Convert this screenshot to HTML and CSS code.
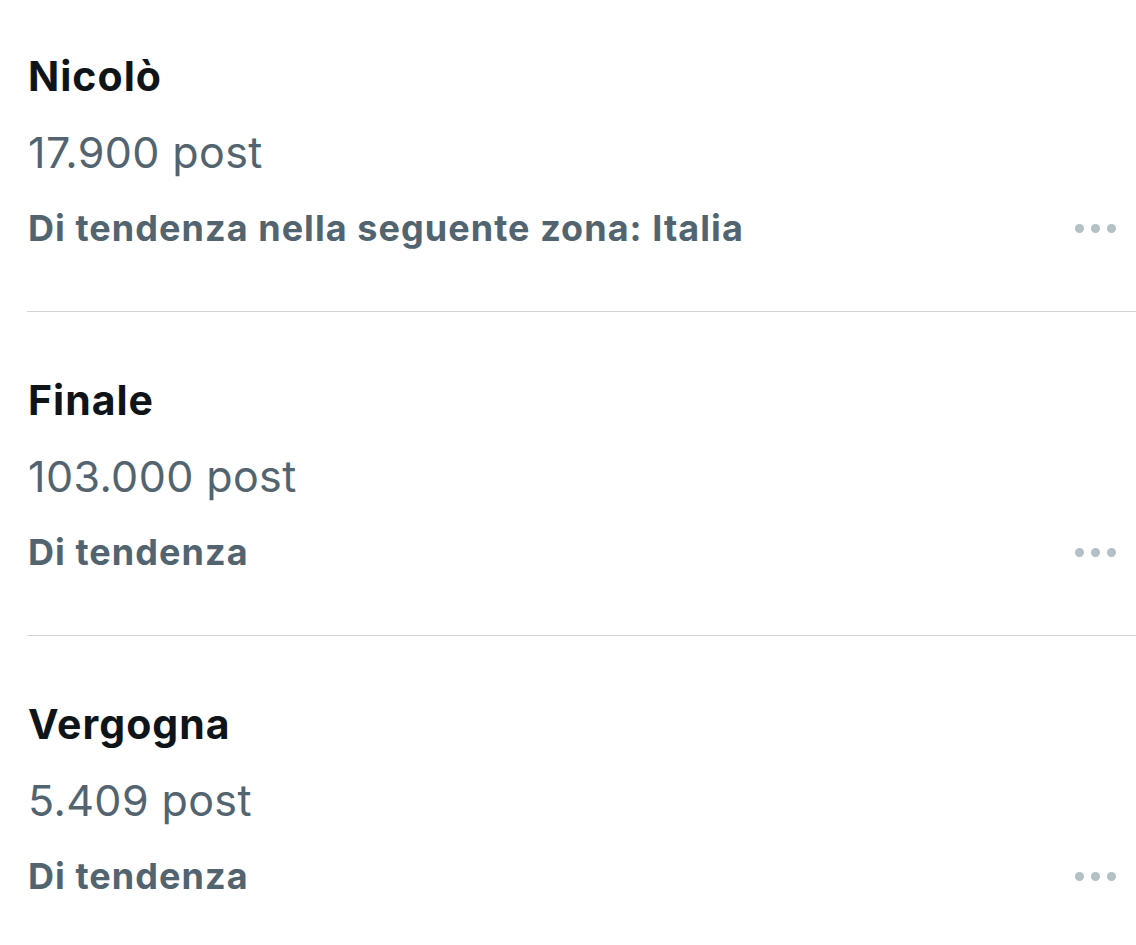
FILE: index.html
```html
<!DOCTYPE html>
<html lang="it">
<head>
<meta charset="utf-8">
<title>Tendenze</title>
<link rel="stylesheet" href="styles.css">
</head>
<body>
<main class="trends">
  <section class="trend trend-first">
    <div class="trend-title">Nicolò</div>
    <div class="trend-count">17.900 post</div>
    <div class="trend-meta">
      <span class="trend-context">Di tendenza nella seguente zona: Italia</span>
      <span class="more" aria-label="Altro"><i></i><i></i><i></i></span>
    </div>
  </section>
  <section class="trend">
    <div class="trend-title">Finale</div>
    <div class="trend-count">103.000 post</div>
    <div class="trend-meta">
      <span class="trend-context">Di tendenza</span>
      <span class="more" aria-label="Altro"><i></i><i></i><i></i></span>
    </div>
  </section>
  <section class="trend trend-last">
    <div class="trend-title">Vergogna</div>
    <div class="trend-count">5.409 post</div>
    <div class="trend-meta">
      <span class="trend-context">Di tendenza</span>
      <span class="more" aria-label="Altro"><i></i><i></i><i></i></span>
    </div>
  </section>
</main>
</body>
</html>
```
FILE: styles.css
```css
html, body {
  margin: 0;
  padding: 0;
  background: #ffffff;
}
body {
  font-family: Inter, "Noto Sans", "Liberation Sans", sans-serif;
  overflow: hidden;
}
.trends {
  margin-left: 27px;
}
.trend {
  padding: 50px 0 45px 1px;
  border-bottom: 1px solid #d3d3d3;
}
.trend-first {
  padding-top: 38px;
}
.trend-last {
  border-bottom: none;
}
.trend-title {
  font-size: 41px;
  font-weight: 700;
  line-height: 76px;
  color: #0f1419;
  letter-spacing: 1px;
}
.trend-count {
  font-size: 43px;
  font-weight: 400;
  line-height: 76px;
  color: #536471;
  letter-spacing: 0.4px;
}
.trend-meta {
  display: flex;
  align-items: center;
  justify-content: space-between;
  height: 76px;
}
.trend-context {
  font-size: 36px;
  font-weight: 700;
  line-height: 76px;
  color: #536471;
  letter-spacing: 1.05px;
}
.more {
  display: flex;
  gap: 7px;
  margin-right: 20px;
}
.more i {
  display: block;
  width: 9px;
  height: 9px;
  border-radius: 50%;
  background: #b3c0c8;
}
```
